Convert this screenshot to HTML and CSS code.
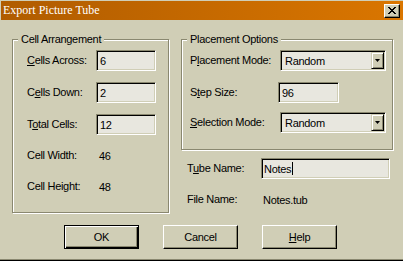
FILE: index.html
```html
<!DOCTYPE html>
<html lang="en">
<head>
    <meta charset="UTF-8">
    <title>Export Picture Tube</title>
    <link rel="stylesheet" href="styles.css">
</head>
<body>

<div class="window">
    <div class="titlebar">
        <span class="title">Export Picture Tube</span>
        <button class="close" aria-label="Close">
            <svg width="8" height="7" viewBox="0 0 8 7" shape-rendering="crispEdges"><path d="M0 0h2v1H0zM6 0h2v1H6zM1 1h2v1H1zM5 1h2v1H5zM2 2h4v1H2zM3 3h2v1H3zM2 4h4v1H2zM1 5h2v1H1zM5 5h2v1H5zM0 6h2v1H0zM6 6h2v1H6z" fill="#000"/></svg>
        </button>
    </div>

    <div class="panels">
        <!-- Cell Arrangement group -->
        <fieldset class="group cells">
            <legend>Cell Arrangement</legend>
            <div class="rows">
                <div class="row"><label><u>C</u>ells Across:</label><div class="edit">6</div></div>
                <div class="row"><label>C<u>e</u>lls Down:</label><div class="edit">2</div></div>
                <div class="row"><label>T<u>o</u>tal Cells:</label><div class="edit">12</div></div>
                <div class="row static"><label>Cell Width:</label><span class="value">46</span></div>
                <div class="row static"><label>Cell Height:</label><span class="value">48</span></div>
            </div>
        </fieldset>

        <div class="side">
            <!-- Placement Options group -->
            <fieldset class="group placement">
                <legend>Placement Options</legend>
                <div class="rows">
                    <div class="row">
                        <label>P<u>l</u>acement Mode:</label>
                        <div class="combo"><span class="combo-text">Random</span><span class="drop"><svg width="5" height="3" viewBox="0 0 5 3"><path d="M0 0h5L2.5 3z" fill="#000"/></svg></span></div>
                    </div>
                    <div class="row step"><label>S<u>t</u>ep Size:</label><div class="edit">96</div></div>
                    <div class="row select"><label><u>S</u>election Mode:</label>
                        <div class="combo"><span class="combo-text">Random</span><span class="drop"><svg width="5" height="3" viewBox="0 0 5 3"><path d="M0 0h5L2.5 3z" fill="#000"/></svg></span></div>
                    </div>
                </div>
            </fieldset>

            <div class="row tube"><label>T<u>u</u>be Name:</label><div class="edit">Notes<span class="caret"></span></div></div>
            <div class="row file"><label>File Name:</label><span class="value">Notes.tub</span></div>
        </div>
    </div>

    <div class="buttons">
        <button class="btn default">OK</button>
        <button class="btn">Cancel</button>
        <button class="btn"><u>H</u>elp</button>
    </div>
</div>

</body>
</html>
```

FILE: styles.css
```css
body {
    margin: 0;
    background: #D0CEB6;
    font-family: "Liberation Sans", Arial, sans-serif;
    font-size: 11px;
    letter-spacing: -0.3px;
    color: #000;
}
.window {
    width: 403px;
    height: 261px;
    box-sizing: border-box;
    padding: 1px 0 0 1px;
    background: #D0CEB6;
    border-bottom: 1px solid #000;
    box-shadow: inset 0 -1px 0 #8A8870;
}
.titlebar {
    height: 19px;
    display: flex;
    align-items: center;
    justify-content: space-between;
    padding: 0 3px 0 2px;
    background: linear-gradient(to right, #B05C00, #DA7600);
}
.title {
    font-family: "Liberation Serif", "Times New Roman", serif;
    font-size: 12px;
    letter-spacing: 0;
    color: #fff;
}
.close {
    width: 16px;
    height: 14px;
    box-sizing: border-box;
    padding: 0 0 1px 0;
    display: flex;
    align-items: center;
    justify-content: center;
    background: #D0CEB6;
    border: 1px solid;
    border-color: #fff #000 #000 #fff;
    box-shadow: inset -1px -1px 0 #8A8870;
}
.panels {
    display: flex;
    align-items: flex-start;
    margin: 13px 0 0 11px;
}
.group {
    margin: 0;
    padding: 0;
    box-sizing: border-box;
    border: 1px solid #8A8870;
    box-shadow: inset 1px 1px 0 #fff, 1px 1px 0 #fff;
}
.group legend {
    padding: 0 3px;
    margin-left: 5px;
    line-height: 13px;
    background: #D0CEB6;
}
.cells {
    width: 157px;
}
.cells .rows {
    padding: 4px 0 15px 14px;
}
.row {
    display: flex;
    align-items: center;
    height: 21px;
}
.row label {
    line-height: 13px;
}
.row + .row {
    margin-top: 11px;
}
.row.static {
    margin-top: 10px;
}
.cells label {
    width: 69px;
}
.value {
    padding-left: 3px;
}
.edit {
    box-sizing: border-box;
    width: 60px;
    height: 21px;
    display: flex;
    align-items: center;
    padding-left: 3px;
    background: #E8E7DF;
    border: 1px solid;
    border-color: #8A8870 #fff #fff #8A8870;
    box-shadow: inset 1px 1px 0 #000, inset -1px -1px 0 #D0CEB6;
}
.side {
    margin-left: 12px;
}
.placement {
    width: 212px;
}
.placement .rows {
    padding: 4px 0 16px 8px;
}
.placement label {
    width: 88px;
}
.placement .step .edit {
    width: 61px;
}
.placement .select {
    margin-top: 9px;
}
.combo {
    box-sizing: border-box;
    width: 106px;
    height: 21px;
    margin-left: 2px;
    display: flex;
    align-items: center;
    padding: 1px 1px 1px 4px;
    background: #E8E7DF;
    border: 1px solid;
    border-color: #8A8870 #fff #fff #8A8870;
    box-shadow: inset 1px 1px 0 #000, inset -1px -1px 0 #D0CEB6;
}
.combo-text {
    flex: 1;
}
.drop {
    box-sizing: border-box;
    width: 13px;
    height: 17px;
    display: flex;
    align-items: center;
    justify-content: center;
    background: #D0CEB6;
    border: 1px solid;
    border-color: #D0CEB6 #000 #000 #D0CEB6;
    box-shadow: inset 1px 1px 0 #fff, inset -1px -1px 0 #8A8870;
}
.tube {
    margin-top: 8px;
    padding-left: 6px;
}
.tube label, .file label {
    width: 74px;
}
.tube .edit {
    width: 129px;
    padding-left: 2px;
}
.row.file {
    margin-top: 10px;
    padding-left: 6px;
}
.file .value {
    padding-left: 2px;
}
.caret {
    display: inline-block;
    width: 1px;
    height: 13px;
    margin-left: 1px;
    background: #000;
}
.buttons {
    display: flex;
    gap: 24px;
    margin: 12px 0 0 63px;
}
.btn {
    box-sizing: border-box;
    width: 75px;
    height: 24px;
    padding: 0;
    font-family: inherit;
    font-size: 11px;
    letter-spacing: -0.3px;
    color: #000;
    background: #D0CEB6;
    border: 1px solid;
    border-color: #fff #000 #000 #fff;
    box-shadow: inset -1px -1px 0 #8A8870;
}
.btn.default {
    border-color: #000;
    box-shadow: inset 1px 1px 0 #fff, inset -1px -1px 0 #000, inset -2px -2px 0 #8A8870;
}
```
